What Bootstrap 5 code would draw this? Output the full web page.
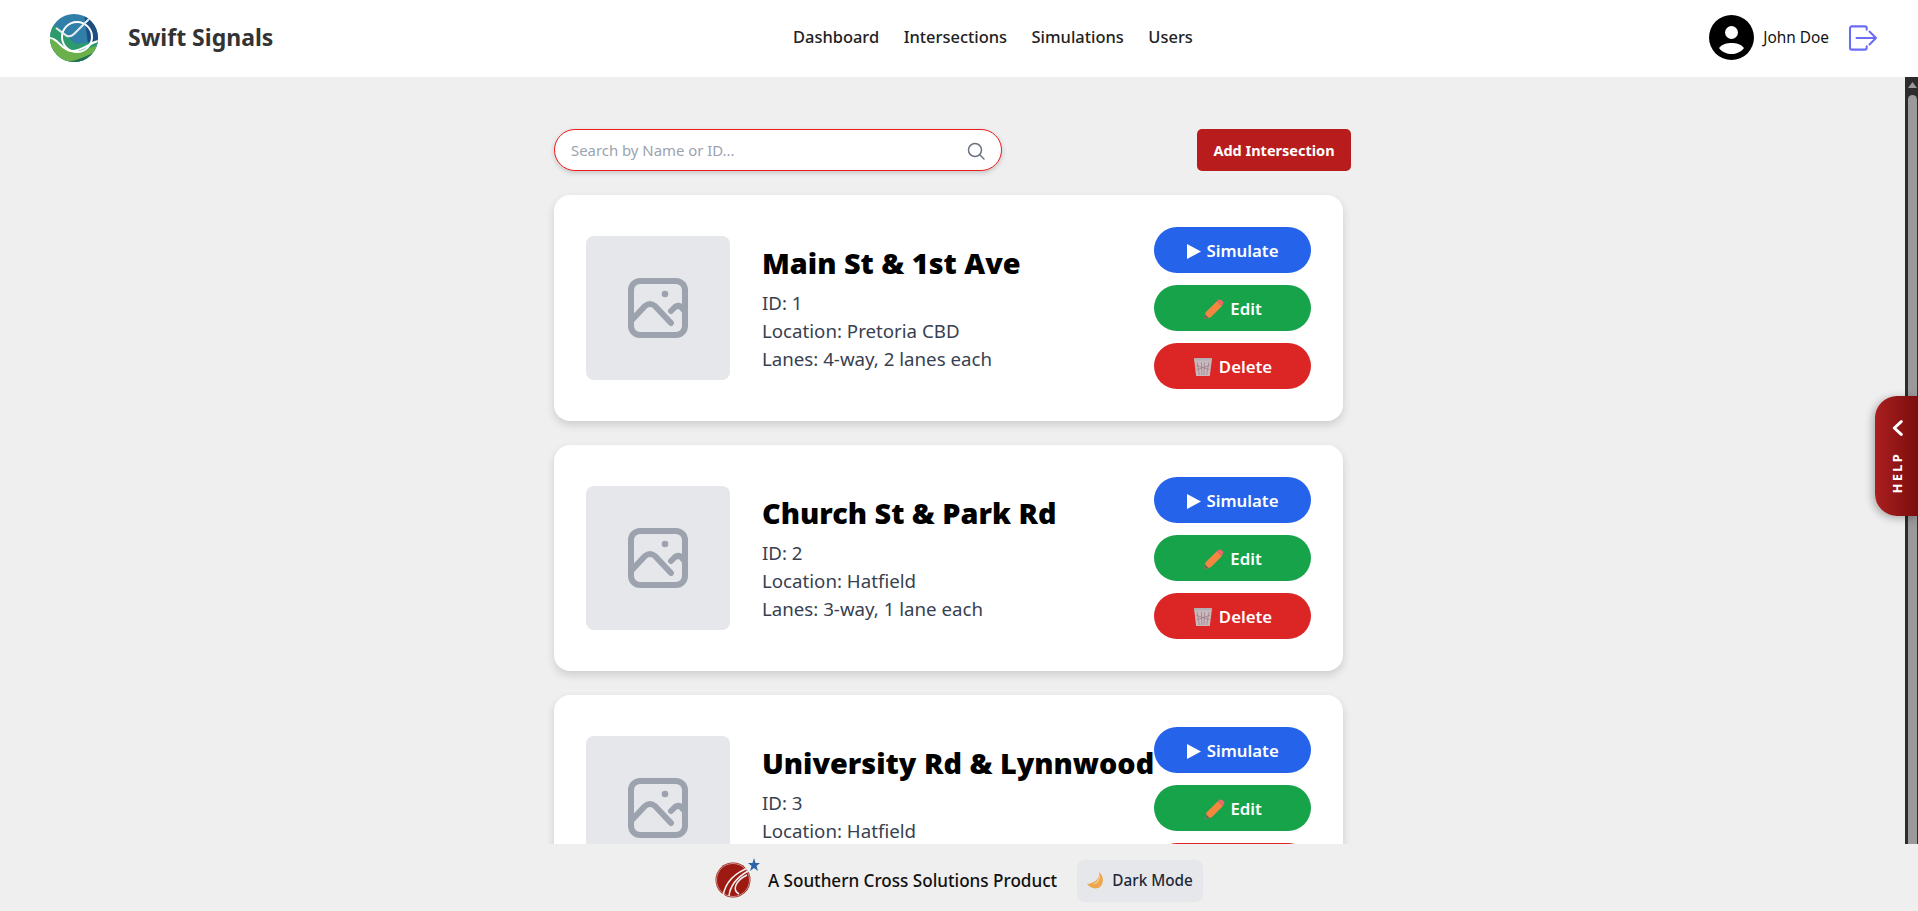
<!DOCTYPE html>
<html lang="en">
<head>
<meta charset="utf-8">
<title>Swift Signals</title>
<link href="https://cdn.jsdelivr.net/npm/bootstrap@5.3.0/dist/css/bootstrap.min.css" rel="stylesheet">
<style>
html,body{height:100%;overflow:hidden}
body{font-family:"Noto Sans","Open Sans",sans-serif;background:#efefef;color:#111}
.app-frame{height:911px;position:relative}
.top-bar{height:77px;background:#fff;padding:0 40px 2px 50px;flex:none}
.brand-gap{gap:30px}
.brand-name{font-size:23px;font-weight:700;color:#333}
.nav-mid{gap:24.5px;position:absolute;left:793px;top:25px}
.nav-mid a{color:#222;font-size:16.45px;font-weight:500;text-decoration:none;line-height:24px}
.user-name{font-size:15.4px;color:#111;margin-left:9px}
.user-box{margin-left:auto}
.logout-ico{margin-left:19px}
.scroll-row{height:767px;overflow:hidden;flex:none}
.main-pane{width:1905px;overflow:hidden}
.content-col{width:797px;padding-top:52px}
.search-box{width:448px;height:42px;border:1.5px solid #ee1c1c;border-radius:21px;background:#fff;box-shadow:0 2px 5px rgba(0,0,0,.18);padding:1px 16px 0}
.search-text{font-size:14.9px;color:#9ca3af}
.add-btn{width:154px;height:42px;background:#b91c1c;color:#fff;font-weight:700;font-size:14.5px;border:0;border-radius:5px;padding:2px 0 0}
.item-card{width:789px;height:226px;background:#fff;border-radius:16px;box-shadow:0 4px 8px rgba(0,0,0,.14);padding:32px;margin-top:24px;flex:none}
.thumb-box{width:144px;height:144px;background:#e5e7eb;border-radius:8px;flex:none;margin-right:32px}
.item-body{padding-top:1px}
.item-title{font-size:28.8px;font-weight:900;color:#000;line-height:36px;margin:0 0 8px;white-space:nowrap}
.item-line{font-size:18.7px;line-height:28px;color:#374151;white-space:nowrap}
.act-col{width:157px;gap:12px;margin-left:auto;flex:none}
.act-btn{height:46px;border:0;border-radius:23px;color:#fff;font-size:16.8px;font-weight:600;gap:6px;padding:2px 0 0}
.act-blue{background:#2563eb}
.act-green{background:#16a34a}
.act-red{background:#dc2626}
.fake-scroll{width:13px;background:#2c2c2c;flex:none;padding:5px 1px 0 3px}
.fake-thumb{background:#9a9a9a;border-radius:5px 5px 0 0;margin-top:7px;height:749px}
.help-tab{position:absolute;right:0;top:396px;width:43px;height:120px;border-radius:22px 0 0 22px;background:linear-gradient(90deg,#ab1f1f,#7a0d0d);box-shadow:-2px 2px 8px rgba(0,0,0,.3);color:#fff;gap:16px;padding:1px 0 0 2px}
.help-word{writing-mode:vertical-rl;transform:rotate(180deg);font-size:13px;font-weight:700;letter-spacing:2.2px;line-height:1}
.foot-bar{height:67px;background:#efefef;gap:10px;padding-top:6px}
.foot-logo{margin-top:-6px;margin-right:-3px}
.foot-text{font-size:17.1px;font-weight:500;color:#111;margin-right:10px}
.mode-btn{width:126px;height:42px;background:#e5e7eb;border:0;border-radius:8px;font-size:15.3px;font-weight:500;color:#1f2937;gap:8px;padding:0}
</style>
</head>
<body>
<div class="app-frame d-flex flex-column">
  <header class="top-bar d-flex align-items-center">
    <div class="d-flex align-items-center brand-gap">
      <svg width="48" height="48" viewBox="0 0 48 48" aria-label="Swift Signals logo">
        <defs><clipPath id="lc"><circle cx="24" cy="24" r="24"/></clipPath></defs>
        <g clip-path="url(#lc)">
          <rect width="48" height="48" fill="#2f7fa8"/>
          <path d="M34 0H48V30H38Z" fill="#1e4f80"/>
          <path d="M0 12C8 10 14 18 24 29C34 31 40 27 48 27V48H0Z" fill="#2d9a6c"/>
          <path d="M0 25C10 25 14 38 24 38C34 38 40 32 48 32V48H0Z" fill="#6bb04a"/>
          <path d="M18 48C28 46 38 42 48 36V48Z" fill="#1d6c55"/>
          <path d="M0 24C8 24 12 37 22 37C32 37 38 30 48 27" fill="none" stroke="#fff" stroke-width="2"/>
          <circle cx="27" cy="23" r="15" fill="none" stroke="#fff" stroke-width="2"/>
          <path d="M6 14L17 22C20 23 22 22 24 20L42 2" fill="none" stroke="#e6edf0" stroke-width="2"/>
        </g>
      </svg>
      <span class="brand-name">Swift Signals</span>
    </div>
    <nav class="nav-mid d-flex">
      <a href="#">Dashboard</a><a href="#">Intersections</a><a href="#">Simulations</a><a href="#">Users</a>
    </nav>
    <div class="user-box d-flex align-items-center">
      <svg width="45" height="45" viewBox="0 0 45 45" aria-label="User avatar">
        <circle cx="22.5" cy="22.5" r="22.5" fill="#000"/>
        <circle cx="22.5" cy="17.500" r="6.500" fill="#fff"/>
        <path d="M10 33C13 29 18 28 22.500 28S32 29 35 33C32 37 27 39 22.500 39S13 37 10 33Z" fill="#fff"/>
      </svg>
      <span class="user-name">John Doe</span>
      <svg class="logout-ico" width="30" height="26" viewBox="0 0 32 28" fill="none" stroke="#6a6cf6" stroke-width="2.200" stroke-linecap="round" stroke-linejoin="round" aria-label="Log out">
        <path d="M20 5V3.500A2 2 0 0 0 18 1.500H4A2 2 0 0 0 2 3.500V24.500A2 2 0 0 0 4 26.500H18A2 2 0 0 0 20 24.500V23"/>
        <path d="M9 14H30M23 7L30 14L23 21"/>
      </svg>
    </div>
  </header>

  <div class="scroll-row d-flex">
    <main class="main-pane d-flex justify-content-center">
      <div class="content-col">
        <div class="d-flex justify-content-between">
          <div class="search-box d-flex align-items-center justify-content-between">
            <span class="search-text">Search by Name or ID...</span>
            <svg width="18" height="18" viewBox="0 0 18 18" fill="none" stroke="#6b7280" stroke-width="1.500" stroke-linecap="round" aria-label="Search"><circle cx="8" cy="8" r="6.500"/><path d="M13 13L17 17"/></svg>
          </div>
          <button class="add-btn" type="button">Add Intersection</button>
        </div>

        <article class="item-card d-flex align-items-center">
          <div class="thumb-box d-flex align-items-center justify-content-center">
            <svg width="60" height="60" viewBox="0 0 60 60" fill="none" stroke="#9ca3af" stroke-width="6" stroke-linecap="round" stroke-linejoin="round"><rect x="3" y="3" width="54" height="54" rx="9"/><path d="M2 44L17 28Q22 24 27 28L43 45M43 33L47 29Q51 26 54 30L58 35"/><circle cx="37" cy="16" r="3.300" fill="#9ca3af" stroke="none"/></svg>
          </div>
          <div class="item-body">
            <h3 class="item-title">Main St &amp; 1st Ave</h3>
            <div class="item-line">ID: 1</div>
            <div class="item-line">Location: Pretoria CBD</div>
            <div class="item-line">Lanes: 4-way, 2 lanes each</div>
          </div>
          <div class="act-col d-flex flex-column">
            <button type="button" class="act-btn act-blue d-flex align-items-center justify-content-center"><svg width="14" height="15" viewBox="0 0 14 15"><path d="M0 0L14 7.500L0 15Z" fill="#fff"/></svg>Simulate</button>
            <button type="button" class="act-btn act-green d-flex align-items-center justify-content-center"><svg width="21" height="21" viewBox="0 0 19 19"><path d="M1 18L2.500 12L12.500 2L17 6.500L7 16.500Z" fill="#f4873f"/><path d="M12.500 2L14 .7Q15.500 0 16.500 .8L18 2.300Q19 3.400 18 4.500L17 6.500Z" fill="#f0646a"/><path d="M1 18L2 14L5 17Z" fill="#666"/></svg>Edit</button>
            <button type="button" class="act-btn act-red d-flex align-items-center justify-content-center"><svg width="20" height="20" viewBox="0 0 19 19"><path d="M1 2H18L16 18H3Z" fill="#c9b8bc"/><path d="M4 5L6 17M8 5L8.500 17M11 5L10.500 17M15 5L13 17M3 8L15.500 12M16 8L3.500 12" stroke="#9c7f86" stroke-width=".7"/><rect x="1" y="1" width="17" height="2.500" fill="#b3b3b8"/></svg>Delete</button>
          </div>
        </article>

        <article class="item-card d-flex align-items-center">
          <div class="thumb-box d-flex align-items-center justify-content-center">
            <svg width="60" height="60" viewBox="0 0 60 60" fill="none" stroke="#9ca3af" stroke-width="6" stroke-linecap="round" stroke-linejoin="round"><rect x="3" y="3" width="54" height="54" rx="9"/><path d="M2 44L17 28Q22 24 27 28L43 45M43 33L47 29Q51 26 54 30L58 35"/><circle cx="37" cy="16" r="3.300" fill="#9ca3af" stroke="none"/></svg>
          </div>
          <div class="item-body">
            <h3 class="item-title">Church St &amp; Park Rd</h3>
            <div class="item-line">ID: 2</div>
            <div class="item-line">Location: Hatfield</div>
            <div class="item-line">Lanes: 3-way, 1 lane each</div>
          </div>
          <div class="act-col d-flex flex-column">
            <button type="button" class="act-btn act-blue d-flex align-items-center justify-content-center"><svg width="14" height="15" viewBox="0 0 14 15"><path d="M0 0L14 7.500L0 15Z" fill="#fff"/></svg>Simulate</button>
            <button type="button" class="act-btn act-green d-flex align-items-center justify-content-center"><svg width="21" height="21" viewBox="0 0 19 19"><path d="M1 18L2.500 12L12.500 2L17 6.500L7 16.500Z" fill="#f4873f"/><path d="M12.500 2L14 .7Q15.500 0 16.500 .8L18 2.300Q19 3.400 18 4.500L17 6.500Z" fill="#f0646a"/><path d="M1 18L2 14L5 17Z" fill="#666"/></svg>Edit</button>
            <button type="button" class="act-btn act-red d-flex align-items-center justify-content-center"><svg width="20" height="20" viewBox="0 0 19 19"><path d="M1 2H18L16 18H3Z" fill="#c9b8bc"/><path d="M4 5L6 17M8 5L8.500 17M11 5L10.500 17M15 5L13 17M3 8L15.500 12M16 8L3.500 12" stroke="#9c7f86" stroke-width=".7"/><rect x="1" y="1" width="17" height="2.500" fill="#b3b3b8"/></svg>Delete</button>
          </div>
        </article>

        <article class="item-card d-flex align-items-center">
          <div class="thumb-box d-flex align-items-center justify-content-center">
            <svg width="60" height="60" viewBox="0 0 60 60" fill="none" stroke="#9ca3af" stroke-width="6" stroke-linecap="round" stroke-linejoin="round"><rect x="3" y="3" width="54" height="54" rx="9"/><path d="M2 44L17 28Q22 24 27 28L43 45M43 33L47 29Q51 26 54 30L58 35"/><circle cx="37" cy="16" r="3.300" fill="#9ca3af" stroke="none"/></svg>
          </div>
          <div class="item-body">
            <h3 class="item-title">University Rd &amp; Lynnwood</h3>
            <div class="item-line">ID: 3</div>
            <div class="item-line">Location: Hatfield</div>
            <div class="item-line">Lanes: 4-way, 2 lanes each</div>
          </div>
          <div class="act-col d-flex flex-column">
            <button type="button" class="act-btn act-blue d-flex align-items-center justify-content-center"><svg width="14" height="15" viewBox="0 0 14 15"><path d="M0 0L14 7.500L0 15Z" fill="#fff"/></svg>Simulate</button>
            <button type="button" class="act-btn act-green d-flex align-items-center justify-content-center"><svg width="21" height="21" viewBox="0 0 19 19"><path d="M1 18L2.500 12L12.500 2L17 6.500L7 16.500Z" fill="#f4873f"/><path d="M12.500 2L14 .7Q15.500 0 16.500 .8L18 2.300Q19 3.400 18 4.500L17 6.500Z" fill="#f0646a"/><path d="M1 18L2 14L5 17Z" fill="#666"/></svg>Edit</button>
            <button type="button" class="act-btn act-red d-flex align-items-center justify-content-center">Delete</button>
          </div>
        </article>
      </div>
    </main>
    <div class="fake-scroll">
      <svg class="d-block" width="9" height="6" viewBox="0 0 9 6"><path d="M4.500 0L9 6H0Z" fill="#999"/></svg>
      <div class="fake-thumb"></div>
    </div>
  </div>

  <footer class="foot-bar d-flex align-items-center justify-content-center">
    <svg class="foot-logo" width="46" height="42" viewBox="0 0 46 42" aria-label="Southern Cross Solutions logo">
      <circle cx="18" cy="23" r="17.500" fill="#9c1a12"/>
      <circle cx="18" cy="23" r="16.500" fill="none" stroke="#d8a8a4" stroke-width=".8"/>
      <path d="M8 39C10 27 18 16 36 10M14 39C15 29 21 21 33 14M24 37C17 33 20 24 32 18" fill="none" stroke="#efefef" stroke-width="1.500"/>
      <path d="M39 1L40.500 6H45L41.500 9L43 14L39 11L35 14L36.500 9L33 6H37.500Z" fill="#2c64a8"/>
    </svg>
    <span class="foot-text">A Southern Cross Solutions Product</span>
    <button type="button" class="mode-btn d-flex align-items-center justify-content-center">
      <svg width="17" height="17" viewBox="0 0 17 17"><path d="M12 0C13 5 10 11 0 12C3 16 9 18 13 15C17 11 17 4 12 0Z" fill="#eda64e"/><path d="M12 0C13 5 11 10 6 12C10 13 15 8 12 0Z" fill="#f6cf87"/></svg>
      Dark Mode
    </button>
  </footer>

  <div class="help-tab d-flex flex-column align-items-center justify-content-center">
    <svg width="11" height="16" viewBox="0 0 10 15" fill="none" stroke="#fff" stroke-width="2.800" stroke-linecap="round" stroke-linejoin="round"><path d="M8.500 1.500L2 7.500L8.500 13.500"/></svg>
    <span class="help-word">HELP</span>
  </div>
</div>
<script src="https://cdn.jsdelivr.net/npm/bootstrap@5.3.0/dist/js/bootstrap.bundle.min.js"></script>
</body>
</html>
